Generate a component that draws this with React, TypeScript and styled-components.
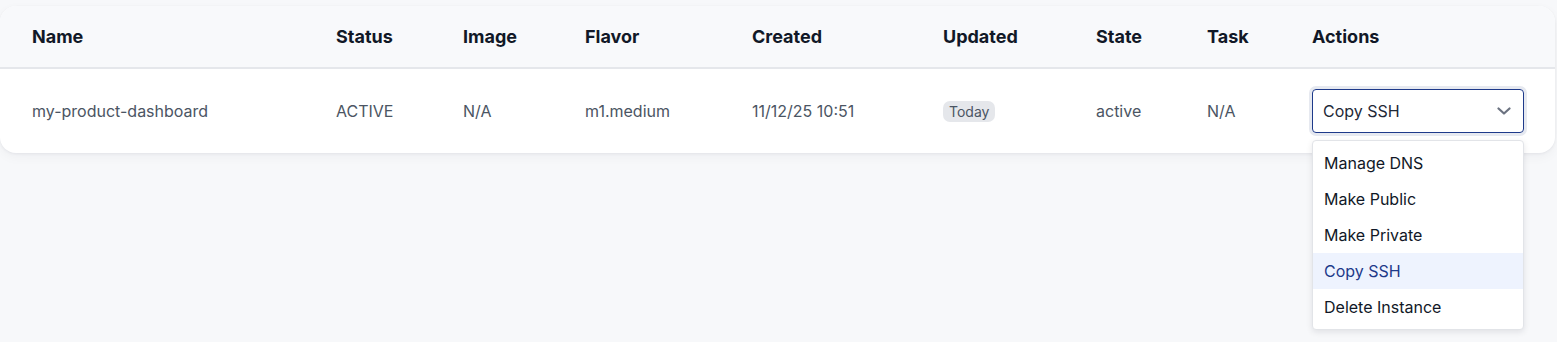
import { createGlobalStyle } from 'styled-components';
import styled from 'styled-components';

const GlobalStyle = createGlobalStyle`
  html, body {
    margin: 0;
    padding: 0;
    background: #f7f8fa;
    font-family: Inter, "Noto Sans", "Liberation Sans", sans-serif;
  }
`;

const COLUMNS = '304px 127px 122px 167px 191px 153px 111px 105px 1fr';

const Page = styled.div`
  padding: 6px 2px 0 0;
  height: 342px;
  box-sizing: border-box;
`;

const Card = styled.div`
  background: #fff;
  border-radius: 16px;
  box-shadow: 0 1px 3px rgba(15, 23, 42, 0.06), 0 4px 12px rgba(15, 23, 42, 0.04);
  position: relative;
`;

const HeadRow = styled.div`
  display: grid;
  grid-template-columns: ${COLUMNS};
  align-items: center;
  height: 61px;
  padding-left: 32px;
  background: #f8f9fb;
  border-bottom: 2px solid #e5e7eb;
  border-radius: 16px 16px 0 0;
`;

const HeadCell = styled.div`
  font-size: 18px;
  font-weight: 700;
  color: #111827;
`;

const BodyRow = styled.div`
  display: grid;
  grid-template-columns: ${COLUMNS};
  align-items: center;
  height: 84px;
  padding-left: 32px;
`;

const Cell = styled.div`
  font-size: 16px;
  color: #4b5563;
`;

const Badge = styled.span`
  display: inline-block;
  background: #e5e7eb;
  color: #4b5563;
  font-size: 14px;
  line-height: 21px;
  padding: 0 6px;
  border-radius: 7px;
`;

const SelectWrap = styled.div`
  position: relative;
  width: 212px;
`;

const Select = styled.div`
  display: flex;
  align-items: center;
  justify-content: space-between;
  height: 44px;
  box-sizing: border-box;
  padding: 0 12px 0 10px;
  border: 1px solid #1e3a8a;
  border-radius: 4px;
  box-shadow: 0 0 0 3px #e6e9f0;
  font-size: 16px;
  color: #1f2937;
`;

const Menu = styled.ul`
  position: absolute;
  top: 51px;
  left: 0;
  width: 100%;
  box-sizing: border-box;
  margin: 0;
  padding: 4px 0;
  list-style: none;
  background: #fff;
  border: 1px solid #e2e4e8;
  border-radius: 4px;
  box-shadow: 0 2px 6px rgba(15, 23, 42, 0.1);
  z-index: 2;
`;

const MenuItem = styled.li<{ $active?: boolean }>`
  height: 36px;
  display: flex;
  align-items: center;
  padding: 0 11px;
  font-size: 16px;
  color: ${(p) => (p.$active ? '#1e3a8a' : '#111827')};
  background: ${(p) => (p.$active ? '#eef3fe' : 'transparent')};
`;

const HEADERS = ['Name', 'Status', 'Image', 'Flavor', 'Created', 'Updated', 'State', 'Task', 'Actions'];
const ACTIONS = ['Manage DNS', 'Make Public', 'Make Private', 'Copy SSH', 'Delete Instance'];

function Chevron() {
  return (
    <svg width="14" height="8" viewBox="0 0 14 8" fill="none" stroke="#6b7280" strokeWidth="2.2" strokeLinecap="round" strokeLinejoin="round">
      <path d="M1.5 1.5l5.5 5 5.5-5" />
    </svg>
  );
}

export default function App() {
  const selected = 'Copy SSH';
  return (
    <Page>
      <GlobalStyle />
      <Card>
        <HeadRow>
          {HEADERS.map((h) => (
            <HeadCell key={h}>{h}</HeadCell>
          ))}
        </HeadRow>
        <BodyRow>
          <Cell>my-product-dashboard</Cell>
          <Cell>ACTIVE</Cell>
          <Cell>N/A</Cell>
          <Cell>m1.medium</Cell>
          <Cell>11/12/25 10:51</Cell>
          <Cell>
            <Badge>Today</Badge>
          </Cell>
          <Cell>active</Cell>
          <Cell>N/A</Cell>
          <Cell>
            <SelectWrap>
              <Select>
                <span>{selected}</span>
                <Chevron />
              </Select>
              <Menu>
                {ACTIONS.map((a) => (
                  <MenuItem key={a} $active={a === selected}>
                    {a}
                  </MenuItem>
                ))}
              </Menu>
            </SelectWrap>
          </Cell>
        </BodyRow>
      </Card>
    </Page>
  );
}
